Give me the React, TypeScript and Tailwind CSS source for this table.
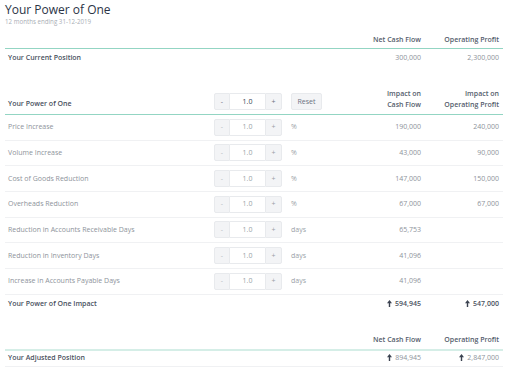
import React from "react";

const Arrow = () => (
  <svg width="5" height="7" viewBox="0 0 5 7" className="inline-block mr-[3px] -mt-[1px]">
    <polygon points="2.5,0 5,3.2 3.2,3.2 3.2,7 1.8,7 1.8,3.2 0,3.2" fill="#3b4250" />
  </svg>
);

const Stepper = ({ dark }: { dark?: boolean }) => (
  <div className="flex h-[17px] w-[68px]">
    <div className={`w-[16px] flex items-center justify-center bg-[#f3f4f6] border border-[#e8eaed] rounded-l-[2px] ${dark ? "text-[#6b7280]" : "text-[#b8bcc3]"}`}>-</div>
    <div className={`w-[35px] flex items-center justify-center bg-white border-y border-[#e8eaed] ${dark ? "text-[#374151]" : "text-[#9a9fa7]"}`}>1.0</div>
    <div className={`w-[17px] flex items-center justify-center bg-[#f3f4f6] border border-[#e8eaed] rounded-r-[2px] ${dark ? "text-[#6b7280]" : "text-[#9a9fa7]"}`}>+</div>
  </div>
);

const rows = [
  { label: "Price Increase", unit: "%", ncf: "190,000", op: "240,000" },
  { label: "Volume Increase", unit: "%", ncf: "43,000", op: "90,000" },
  { label: "Cost of Goods Reduction", unit: "%", ncf: "147,000", op: "150,000" },
  { label: "Overheads Reduction", unit: "%", ncf: "67,000", op: "67,000" },
  { label: "Reduction in Accounts Receivable Days", unit: "days", ncf: "65,753", op: "" },
  { label: "Reduction in Inventory Days", unit: "days", ncf: "41,096", op: "" },
  { label: "Increase in Accounts Payable Days", unit: "days", ncf: "41,096", op: "" },
];

export default function App() {
  return (
    <div
      className="w-[512px] h-[370px] bg-white px-[5px] pr-[9px] text-[7px] leading-[10px] overflow-hidden"
      style={{ fontFamily: '"Open Sans", "Liberation Sans", sans-serif' }}
    >
      <div className="mt-[3px] h-[14px] text-[12px] leading-[14px] text-[#2b3446]">Your Power of One</div>
      <div className="mt-[1px] h-[7px] text-[6.2px] leading-[7px] text-[#a9aeb5]">12 months ending 31-12-2019</div>

      {/* Section 1 */}
      <div className="flex items-end h-[24px] pb-[3px] border-b border-[#93d5c3] font-semibold text-[#555d6b]">
        <div className="flex-1" />
        <div className="w-[80px] text-right pr-[4px]">Net Cash Flow</div>
        <div className="w-[78px] text-right pr-[4px]">Operating Profit</div>
      </div>
      <div className="flex items-center h-[18px]">
        <div className="flex-1 pl-[3px] font-semibold text-[#4a5160]">Your Current Position</div>
        <div className="w-[80px] text-right pr-[4px] text-[#8e939b]">300,000</div>
        <div className="w-[78px] text-right pr-[4px] text-[#8e939b]">2,300,000</div>
      </div>

      {/* Section 2 */}
      <div className="flex items-end h-[48px] pb-[4px] border-b border-[#93d5c3]">
        <div className="w-[209px] pl-[3px] pb-[1px] font-semibold text-[#4a5160]">Your Power of One</div>
        <Stepper dark />
        <div className="flex-1 pl-[9px]">
          <div className="w-[31px] h-[17px] flex items-center justify-center bg-[#f3f4f6] border border-[#e8eaed] rounded-[2px] text-[#6b7280]">Reset</div>
        </div>
        <div className="w-[80px] text-right pr-[4px] leading-[11px] font-semibold text-[#555d6b]">
          <div>Impact on</div>
          <div>Cash Flow</div>
        </div>
        <div className="w-[78px] text-right pr-[4px] leading-[11px] font-semibold text-[#555d6b]">
          <div>Impact on</div>
          <div>Operating Profit</div>
        </div>
      </div>

      {rows.map((r) => (
        <div key={r.label} className="flex items-center h-[25.67px] border-b border-[#f0f1f3] text-[#8e939b]">
          <div className="w-[209px] pl-[3px]">{r.label}</div>
          <Stepper />
          <div className="flex-1 pl-[9px] text-[#9a9fa7]">{r.unit}</div>
          <div className="w-[80px] text-right pr-[4px]">{r.ncf}</div>
          <div className="w-[78px] text-right pr-[4px]">{r.op}</div>
        </div>
      ))}

      <div className="flex items-center h-[18px] font-semibold text-[#4a5160]">
        <div className="flex-1 pl-[3px]">Your Power of One Impact</div>
        <div className="w-[80px] text-right pr-[4px]"><Arrow />594,945</div>
        <div className="w-[78px] text-right pr-[4px]"><Arrow />547,000</div>
      </div>

      {/* Section 3 */}
      <div className="flex items-end h-[38px] pb-[4px] border-b-2 border-[#d5eee7] font-semibold text-[#555d6b]">
        <div className="flex-1" />
        <div className="w-[80px] text-right pr-[4px]">Net Cash Flow</div>
        <div className="w-[78px] text-right pr-[4px]">Operating Profit</div>
      </div>
      <div className="flex items-center h-[16px] border-b border-[#f0f1f3]">
        <div className="flex-1 pl-[3px] font-semibold text-[#4a5160]">Your Adjusted Position</div>
        <div className="w-[80px] text-right pr-[4px] text-[#8e939b]"><Arrow />894,945</div>
        <div className="w-[78px] text-right pr-[4px] text-[#8e939b]"><Arrow />2,847,000</div>
      </div>
    </div>
  );
}
